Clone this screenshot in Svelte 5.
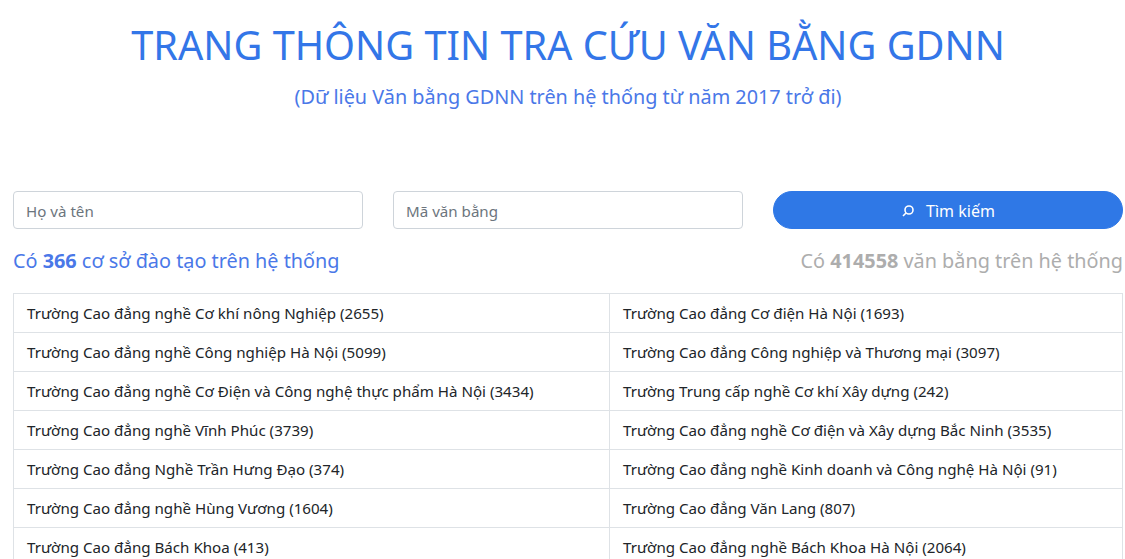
<script>
  const rows = [
    ["Trường Cao đẳng nghề Cơ khí nông Nghiệp (2655)", "Trường Cao đẳng Cơ điện Hà Nội (1693)"],
    ["Trường Cao đẳng nghề Công nghiệp Hà Nội (5099)", "Trường Cao đẳng Công nghiệp và Thương mại (3097)"],
    ["Trường Cao đẳng nghề Cơ Điện và Công nghệ thực phẩm Hà Nội (3434)", "Trường Trung cấp nghề Cơ khí Xây dựng (242)"],
    ["Trường Cao đẳng nghề Vĩnh Phúc (3739)", "Trường Cao đẳng nghề Cơ điện và Xây dựng Bắc Ninh (3535)"],
    ["Trường Cao đẳng Nghề Trần Hưng Đạo (374)", "Trường Cao đẳng nghề Kinh doanh và Công nghệ Hà Nội (91)"],
    ["Trường Cao đẳng nghề Hùng Vương (1604)", "Trường Cao đẳng Văn Lang (807)"],
    ["Trường Cao đẳng Bách Khoa (413)", "Trường Cao đẳng nghề Bách Khoa Hà Nội (2064)"]
  ];
</script>

<div class="page">
  <h1 class="title">TRANG THÔNG TIN TRA CỨU VĂN BẰNG GDNN</h1>
  <p class="subtitle">(Dữ liệu Văn bằng GDNN trên hệ thống từ năm 2017 trở đi)</p>

  <form class="search">
    <input class="input" placeholder="Họ và tên" />
    <input class="input" placeholder="Mã văn bằng" />
    <button class="btn" type="button">
      <svg width="14" height="14" viewBox="0 0 14 14" fill="none" stroke="currentColor" stroke-width="1.6"><circle cx="8" cy="6" r="4" /><path d="M5 9 L2 12" /></svg>
      Tìm kiếm
    </button>
  </form>

  <div class="stats">
    <span class="blue">Có <b>366</b> cơ sở đào tạo trên hệ thống</span>
    <span class="grey">Có <b>414558</b> văn bằng trên hệ thống</span>
  </div>

  <table class="table">
    <tbody>
      {#each rows as r}
        <tr><td class="left">{r[0]}</td><td>{r[1]}</td></tr>
      {/each}
    </tbody>
  </table>
</div>

<style>
  :global(body) { margin: 0; background: #fff; font-family: "Noto Sans", "Open Sans", sans-serif; overflow: hidden; }
  .page { width: 1136px; padding: 0 13px; height: 559px; overflow: hidden; box-sizing: border-box; }
  .title { margin: 0; padding-top: 18px; text-align: center; font-size: 39.68px; line-height: 54px; font-weight: 400; color: #3376e8; }
  .subtitle { margin: 11px 0 0; text-align: center; font-size: 19.84px; line-height: 27px; color: #4a78e8; }
  .search { display: grid; grid-template-columns: repeat(3, 1fr); gap: 30px; margin-top: 81px; }
  .input { height: 38px; min-width: 0; box-sizing: border-box; border: 1px solid #ced4da; border-radius: 4px; padding: 2px 12px 0; font: 15.13px "Noto Sans", sans-serif; color: #495057; }
  .input::placeholder { color: #6c757d; opacity: 1; }
  .btn { height: 38px; border: 1px solid #2f78e6; border-radius: 19px; background: #2f78e6; color: #fff; padding: 2px 0 0; font: 16px "Noto Sans", sans-serif; display: flex; align-items: center; justify-content: center; gap: 11px; }
  .stats { display: flex; justify-content: space-between; margin-top: 18px; font-size: 19.84px; line-height: 27px; }
  .blue { color: #4a78e8; }
  .grey { color: #adadad; }
  .table { width: 100%; margin-top: 19px; border-collapse: collapse; table-layout: fixed; font-size: 15.13px; color: #212529; }
  td { border: 1px solid #dee2e6; height: 39px; padding: 0 13px; box-sizing: border-box; white-space: nowrap; }
  .left { width: 596px; }
</style>
